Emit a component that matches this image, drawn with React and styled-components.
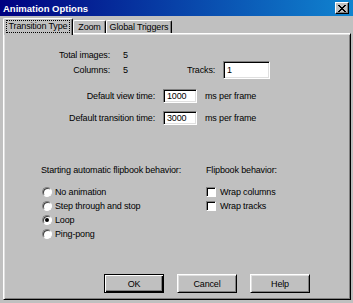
import React from "react";
import styled, { createGlobalStyle } from "styled-components";

const GlobalStyle = createGlobalStyle`
  html, body { margin: 0; padding: 0; background: #c0c0c0; }
  body {
    font-family: "Liberation Sans", Arial, sans-serif;
    font-size: 9px;
    letter-spacing: -0.15px;
    color: #000;
  }
`;

const Window = styled.div`
  width: 353px;
  height: 303px;
  display: flex;
  flex-direction: column;
  background: #c0c0c0;
  overflow: hidden;
`;

const TitleBar = styled.div`
  height: 16px;
  flex-shrink: 0;
  display: flex;
  align-items: center;
  justify-content: space-between;
  padding: 0 4px 0 3px;
  background: linear-gradient(to right, #000080, #1084d0);
  color: #fff;
  font-weight: bold;
  font-size: 9.5px;
  letter-spacing: 0;
`;

const CloseButton = styled.div`
  width: 14px;
  height: 12px;
  box-sizing: border-box;
  display: flex;
  align-items: center;
  justify-content: center;
  background: #c0c0c0;
  border-top: 1px solid #fff;
  border-left: 1px solid #fff;
  border-right: 1px solid #000;
  border-bottom: 1px solid #000;
  box-shadow: inset -1px -1px 0 #808080;
`;

const TabStrip = styled.div`
  height: 17px;
  flex-shrink: 0;
  display: flex;
  align-items: flex-end;
  padding-left: 3px;
`;

const Tab = styled.div`
  position: relative;
  z-index: 1;
  box-sizing: border-box;
  width: ${(p) => p.$w}px;
  height: ${(p) => (p.$active ? 17 : 13)}px;
  margin-bottom: ${(p) => (p.$active ? -2 : 0)}px;
  display: flex;
  align-items: center;
  justify-content: center;
  background: #c0c0c0;
  border-top: 1px solid #fff;
  border-left: 1px solid #fff;
  border-right: 1px solid #000;
  border-radius: 2px 2px 0 0;
  box-shadow: inset -1px 0 0 #808080;
  padding-bottom: ${(p) => (p.$active ? 2 : 0)}px;
`;

const TabLabel = styled.span`
  padding: 0 2px;
  line-height: 11px;
  outline: ${(p) => (p.$focus ? "1px dotted #000" : "none")};
`;

const Panel = styled.div`
  flex: 1;
  margin: 0 2px 3px 3px;
  display: flex;
  flex-direction: column;
  border-top: 1px solid #fff;
  border-left: 1px solid #fff;
  border-right: 1px solid #000;
  border-bottom: 1px solid #000;
  box-shadow: inset 1px 1px 0 #dfdfdf, inset -1px -1px 0 #808080;
  padding-top: 15px;
  padding-bottom: 6px;
`;

const Row = styled.div`
  display: flex;
  align-items: center;
  height: ${(p) => p.$h}px;
  margin-top: ${(p) => p.$mt || 0}px;
  line-height: 12px;
`;

const RightLabel = styled.span`
  flex-shrink: 0;
  width: ${(p) => p.$w}px;
  text-align: right;
`;

const Value = styled.span`
  flex-shrink: 0;
  width: ${(p) => p.$w}px;
  margin-left: ${(p) => p.$ml}px;
`;

const Field = styled.div`
  box-sizing: border-box;
  flex-shrink: 0;
  width: ${(p) => p.$w}px;
  height: ${(p) => p.$h}px;
  margin-left: ${(p) => p.$ml || 0}px;
  background: #fff;
  border-top: 1px solid #808080;
  border-left: 1px solid #808080;
  border-right: 1px solid #fff;
  border-bottom: 1px solid #fff;
  box-shadow: inset 1px 1px 0 #000, inset -1px -1px 0 #dfdfdf;
  padding-left: 3px;
  display: flex;
  align-items: center;
`;

const Unit = styled.span`
  margin-left: 8px;
`;

const Sections = styled.div`
  display: flex;
  margin-top: 39px;
  padding-left: 37px;
`;

const Column = styled.div`
  width: ${(p) => p.$w}px;
  display: flex;
  flex-direction: column;
`;

const Heading = styled.div`
  height: 12px;
  line-height: 12px;
  margin-bottom: 9px;
`;

const Option = styled.div`
  display: flex;
  align-items: center;
  height: 14px;
  gap: ${(p) => p.$gap}px;
  padding-left: ${(p) => p.$pl || 0}px;
`;

const Radio = styled.span`
  box-sizing: border-box;
  position: relative;
  width: 10px;
  height: 10px;
  border-radius: 50%;
  background: #fff;
  border: 1px solid;
  border-color: #808080 #fff #fff #808080;
  box-shadow: inset 1px 1px 0 #404040;
  &::after {
    content: "";
    display: ${(p) => (p.$checked ? "block" : "none")};
    position: absolute;
    left: 2px;
    top: 2px;
    width: 4px;
    height: 4px;
    border-radius: 50%;
    background: #000;
  }
`;

const Check = styled.span`
  box-sizing: border-box;
  width: 10px;
  height: 10px;
  background: #fff;
  border-top: 1px solid #808080;
  border-left: 1px solid #808080;
  border-right: 1px solid #fff;
  border-bottom: 1px solid #fff;
  box-shadow: inset 1px 1px 0 #000;
`;

const ButtonRow = styled.div`
  margin-top: auto;
  display: flex;
  gap: 13px;
  padding-left: 100px;
`;

const Button = styled.div`
  box-sizing: border-box;
  width: 60px;
  height: 19px;
  display: flex;
  align-items: center;
  justify-content: center;
  background: #c0c0c0;
  border: 1px solid #000;
  border-top-color: ${(p) => (p.$default ? "#000" : "#fff")};
  border-left-color: ${(p) => (p.$default ? "#000" : "#fff")};
  box-shadow: ${(p) =>
    p.$default
      ? "inset 1px 1px 0 #fff, inset -1px -1px 0 #000, inset -2px -2px 0 #808080"
      : "inset 1px 1px 0 #dfdfdf, inset -1px -1px 0 #808080"};
`;

const CloseIcon = () => (
  <svg width="8" height="7" viewBox="0 0 8 7">
    <path
      fill="#000"
      d="M0 0h2v1H0zM6 0h2v1H6zM1 1h2v1H1zM5 1h2v1H5zM2 2h4v1H2zM3 3h2v1H3zM2 4h4v1H2zM1 5h2v1H1zM5 5h2v1H5zM0 6h2v1H0zM6 6h2v1H6z"
    />
  </svg>
);

const radios = [
  { label: "No animation", checked: false },
  { label: "Step through and stop", checked: false },
  { label: "Loop", checked: true },
  { label: "Ping-pong", checked: false },
];

export default function App() {
  return (
    <>
      <GlobalStyle />
      <Window>
        <TitleBar>
          <span>Animation Options</span>
          <CloseButton>
            <CloseIcon />
          </CloseButton>
        </TitleBar>
        <TabStrip>
          <Tab $w={70} $active>
            <TabLabel $focus>Transition Type</TabLabel>
          </Tab>
          <Tab $w={33}>
            <TabLabel>Zoom</TabLabel>
          </Tab>
          <Tab $w={66}>
            <TabLabel>Global Triggers</TabLabel>
          </Tab>
        </TabStrip>
        <Panel>
          <Row $h={12}>
            <RightLabel $w={106}>Total images:</RightLabel>
            <Value $w={64} $ml={13}>5</Value>
          </Row>
          <Row $h={18}>
            <RightLabel $w={106}>Columns:</RightLabel>
            <Value $w={64} $ml={13}>5</Value>
            <Value $w={36} $ml={0}>Tracks:</Value>
            <Field $w={47} $h={18}>1</Field>
          </Row>
          <Row $h={14} $mt={10}>
            <RightLabel $w={151}>Default view time:</RightLabel>
            <Field $w={34} $h={14} $ml={8}>1000</Field>
            <Unit>ms per frame</Unit>
          </Row>
          <Row $h={14} $mt={8}>
            <RightLabel $w={151}>Default transition time:</RightLabel>
            <Field $w={34} $h={14} $ml={8}>3000</Field>
            <Unit>ms per frame</Unit>
          </Row>
          <Sections>
            <Column $w={165}>
              <Heading>Starting automatic flipbook behavior:</Heading>
              {radios.map((r) => (
                <Option key={r.label} $gap={3} $pl={1}>
                  <Radio $checked={r.checked} />
                  <span>{r.label}</span>
                </Option>
              ))}
            </Column>
            <Column $w={120}>
              <Heading>Flipbook behavior:</Heading>
              <Option $gap={4}>
                <Check />
                <span>Wrap columns</span>
              </Option>
              <Option $gap={4}>
                <Check />
                <span>Wrap tracks</span>
              </Option>
            </Column>
          </Sections>
          <ButtonRow>
            <Button $default>OK</Button>
            <Button>Cancel</Button>
            <Button>Help</Button>
          </ButtonRow>
        </Panel>
      </Window>
    </>
  );
}
